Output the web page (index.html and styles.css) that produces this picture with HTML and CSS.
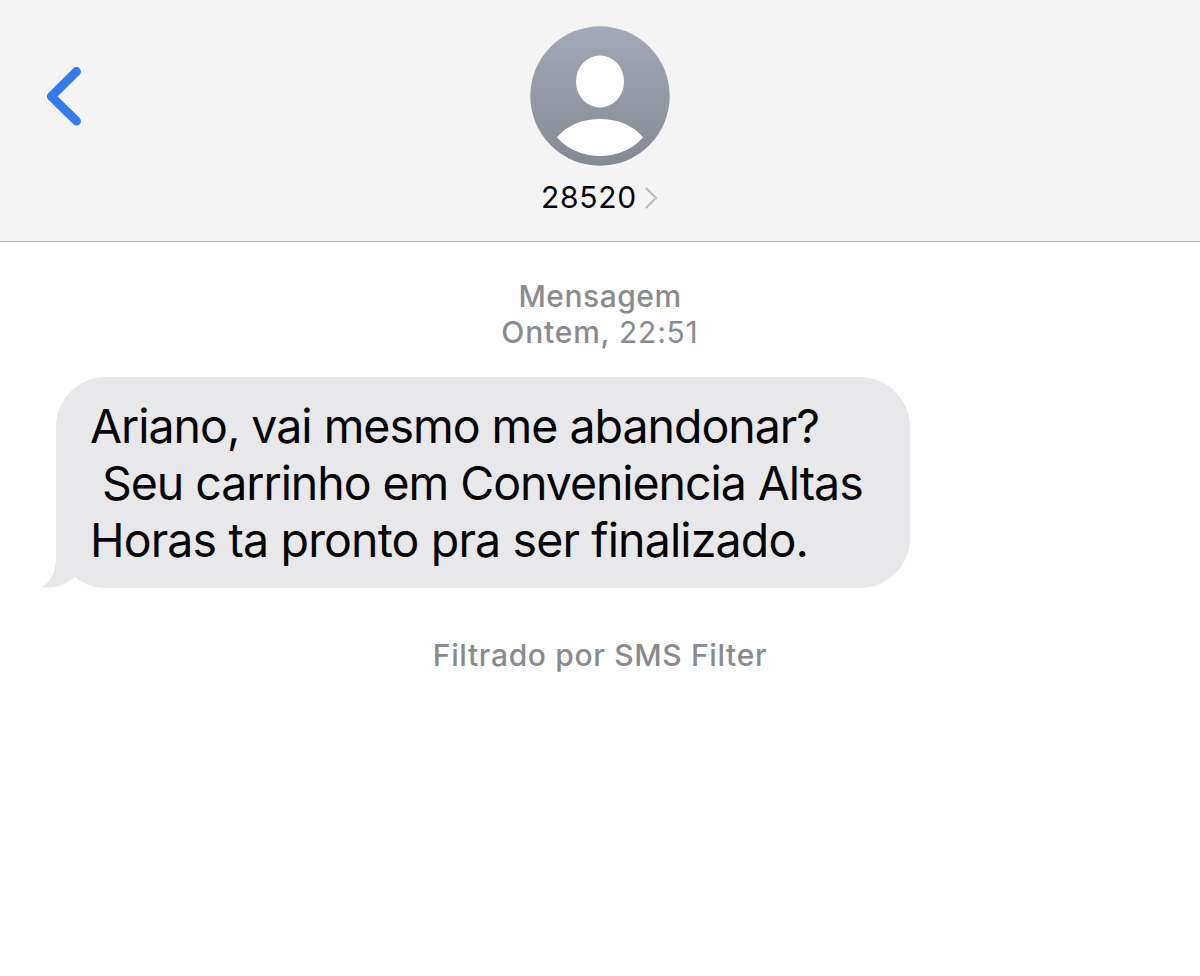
FILE: index.html
```html
<!DOCTYPE html>
<html lang="pt-BR">
<head>
<meta charset="utf-8">
<title>28520</title>
<link rel="stylesheet" href="styles.css">
</head>
<body>
<header class="header">
  <button class="back" aria-label="Voltar">
    <svg width="40" height="64" viewBox="0 0 40 64"><path d="M32.500 7.500 7.300 32.300 32.500 57.200" fill="none" stroke="#327bee" stroke-width="8.800" stroke-linecap="round" stroke-linejoin="round"/></svg>
  </button>
  <div class="contact">
    <svg class="avatar" width="140" height="140" viewBox="0 0 140 140">
      <defs><linearGradient id="shade" x1="0" y1="0" x2="0" y2="1"><stop offset="0" stop-color="#a4a9b7"/><stop offset="1" stop-color="#858992"/></linearGradient></defs>
      <circle cx="70" cy="70" r="69.7" fill="url(#shade)"/>
      <ellipse cx="70" cy="55.5" rx="24" ry="26" fill="#fff"/>
      <path d="M27 111.500C37 99 53 93 70 93S103 99 113 111.500C103 123 87 130 70 130S37 123 27 111.500Z" fill="#fff"/>
    </svg>
    <div class="name"><span class="number">28520</span><svg width="14" height="24" viewBox="0 0 14 24"><path d="M1.500 3.500 11 13 1.500 22.500" fill="none" stroke="#bfbfc1" stroke-width="2.400" stroke-linecap="round" stroke-linejoin="round"/></svg></div>
  </div>
</header>
<main class="thread">
  <div class="stamp"><span class="kind">Mensagem</span><span><span class="day">Ontem,</span> <span class="time">22:51</span></span></div>
  <div class="bubble">
    <svg class="tail" width="36" height="54" viewBox="0 0 36 54"><path d="M15 0V23C15 38 10 48 0 53.200C12 55 24 51.500 33 43Z" fill="#e8e8ea"/></svg>
    <span class="line first">Ariano, vai mesmo me abandonar?</span>
    <span class="line second"> Seu carrinho em Conveniencia Altas</span>
    <span class="line third">Horas ta pronto pra ser finalizado.</span>
  </div>
  <div class="filter">Filtrado por SMS Filter</div>
</main>
</body>
</html>
```
FILE: styles.css
```css
* { box-sizing: border-box; }
body {
  margin: 0;
  height: 976px;
  background: #fff;
  color: #050507;
  font-family: Inter, "Liberation Sans", sans-serif;
  overflow: hidden;
}
svg { display: block; }
.header {
  display: grid;
  grid-template-columns: 1fr auto 1fr;
  height: 242px;
  padding-top: 26px;
  background: #f4f4f5;
  border-bottom: 1px solid #b2b2b4;
}
.back {
  justify-self: start;
  align-self: start;
  margin: 38px 0 0 44px;
  padding: 0;
  border: 0;
  background: none;
}
.contact {
  display: flex;
  flex-direction: column;
  align-items: center;
}
.name {
  display: flex;
  align-items: center;
  gap: 8px;
  margin-top: 13px;
  font-size: 30px;
  line-height: 36px;
}
.number { letter-spacing: 0.7px; }
.thread {
  display: flex;
  flex-direction: column;
  align-items: center;
  padding-top: 36px;
}
.stamp {
  display: flex;
  flex-direction: column;
  align-items: center;
  color: #8b8b8f;
  font-size: 30px;
  line-height: 36px;
}
.kind, .day, .filter { font-weight: 500; letter-spacing: 0.5px; }
.day { letter-spacing: 0.8px; }
.time { letter-spacing: 0.8px; }
.bubble {
  position: relative;
  align-self: flex-start;
  width: 854px;
  height: 211px;
  margin: 27px 0 0 56px;
  padding: 21px 0 0 34px;
  border-radius: 50px;
  background: #e8e8ea;
  font-size: 46.5px;
  line-height: 57px;
}
.tail { position: absolute; left: -15px; bottom: 0; }
.line { display: block; white-space: pre; }
.first { letter-spacing: -1.02px; }
.second { letter-spacing: -1.06px; }
.third { letter-spacing: -0.86px; }
.filter {
  margin-top: 49px;
  color: #8b8b8f;
  font-size: 30px;
  line-height: 36px;
  letter-spacing: 0.65px;
}
```
